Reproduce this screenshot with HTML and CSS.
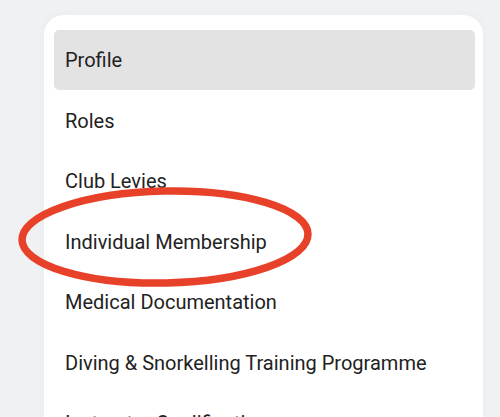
FILE: index.html
```html
<!DOCTYPE html>
<html>
<head>
<meta charset="utf-8">
<link rel="stylesheet" href="styles.css">
</head>
<body>
<div class="page">
  <nav class="card">
    <ul class="menu">
      <li class="item active">Profile</li>
      <li class="item">Roles</li>
      <li class="item">Club Levies</li>
      <li class="item">Individual Membership</li>
      <li class="item">Medical Documentation</li>
      <li class="item">Diving &amp; Snorkelling Training Programme</li>
      <li class="item">Instructor Qualifications</li>
    </ul>
  </nav>
  <svg class="mark" width="500" height="417" viewBox="0 0 500 417">
    <ellipse cx="165" cy="237" rx="143" ry="46" fill="none" stroke="#e8412a" stroke-width="7.5" transform="rotate(-1.2 165 237)"/>
  </svg>
</div>
</body>
</html>
```
FILE: styles.css
```css
html, body {
  margin: 0;
  padding: 0;
  width: 500px;
  height: 417px;
  overflow: hidden;
  background: #f0f1f3;
}
.page {
  position: relative;
  width: 500px;
  height: 417px;
  padding: 15px 17px 0 44px;
  box-sizing: border-box;
  font-family: Roboto, "Noto Sans", sans-serif;
}
.card {
  background: #ffffff;
  border-radius: 20px 20px 0 0;
  padding: 15px 8px 0 10px;
  height: 460px;
  box-shadow: 0 0 12px rgba(0, 0, 0, 0.03);
}
.menu {
  list-style: none;
  margin: 0;
  padding: 0;
  display: flex;
  flex-direction: column;
}
.item {
  height: 60.5px;
  display: flex;
  align-items: center;
  padding-left: 11px;
  font-size: 20px;
  color: #222222;
  border-radius: 5px;
  white-space: nowrap;
}
.item.active {
  height: 60px;
  margin-bottom: 0.5px;
  background: #e3e3e3;
}
.mark {
  position: absolute;
  left: 0;
  top: 0;
  pointer-events: none;
}
```
